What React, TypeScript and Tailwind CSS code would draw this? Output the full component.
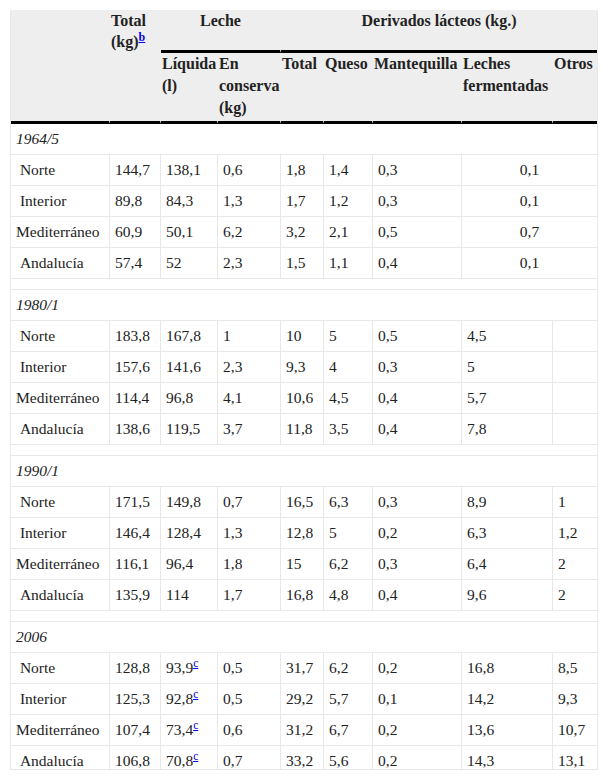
import React from 'react';

type Row = { name: string; vals: string[] };
type Section = { year: string; rows: Row[]; merged?: boolean; supLiquida?: boolean };

const sections: Section[] = [
  {
    year: '1964/5',
    merged: true,
    rows: [
      { name: '\u00a0Norte', vals: ['144,7', '138,1', '0,6', '1,8', '1,4', '0,3', '0,1'] },
      { name: '\u00a0Interior', vals: ['89,8', '84,3', '1,3', '1,7', '1,2', '0,3', '0,1'] },
      { name: 'Mediterráneo', vals: ['60,9', '50,1', '6,2', '3,2', '2,1', '0,5', '0,7'] },
      { name: '\u00a0Andalucía', vals: ['57,4', '52', '2,3', '1,5', '1,1', '0,4', '0,1'] },
    ],
  },
  {
    year: '1980/1',
    rows: [
      { name: '\u00a0Norte', vals: ['183,8', '167,8', '1', '10', '5', '0,5', '4,5', ''] },
      { name: '\u00a0Interior', vals: ['157,6', '141,6', '2,3', '9,3', '4', '0,3', '5', ''] },
      { name: 'Mediterráneo', vals: ['114,4', '96,8', '4,1', '10,6', '4,5', '0,4', '5,7', ''] },
      { name: '\u00a0Andalucía', vals: ['138,6', '119,5', '3,7', '11,8', '3,5', '0,4', '7,8', ''] },
    ],
  },
  {
    year: '1990/1',
    rows: [
      { name: '\u00a0Norte', vals: ['171,5', '149,8', '0,7', '16,5', '6,3', '0,3', '8,9', '1'] },
      { name: '\u00a0Interior', vals: ['146,4', '128,4', '1,3', '12,8', '5', '0,2', '6,3', '1,2'] },
      { name: 'Mediterráneo', vals: ['116,1', '96,4', '1,8', '15', '6,2', '0,3', '6,4', '2'] },
      { name: '\u00a0Andalucía', vals: ['135,9', '114', '1,7', '16,8', '4,8', '0,4', '9,6', '2'] },
    ],
  },
  {
    year: '2006',
    supLiquida: true,
    rows: [
      { name: '\u00a0Norte', vals: ['128,8', '93,9', '0,5', '31,7', '6,2', '0,2', '16,8', '8,5'] },
      { name: '\u00a0Interior', vals: ['125,3', '92,8', '0,5', '29,2', '5,7', '0,1', '14,2', '9,3'] },
      { name: 'Mediterráneo', vals: ['107,4', '73,4', '0,6', '31,2', '6,7', '0,2', '13,6', '10,7'] },
      { name: '\u00a0Andalucía', vals: ['106,8', '70,8', '0,7', '33,2', '5,6', '0,2', '14,3', '13,1'] },
    ],
  },
];

// header cells: bold, top aligned, thick black rule underneath
const th =
  'align-top font-bold text-[16px] px-px border-r border-r-[#eeeeee] border-b-[3px] border-b-black';
const td = 'px-[5px] py-[5px] leading-[20px] border-b border-[#e8e8e8]';

export default function App() {
  return (
    <div className="p-[10px] bg-white font-['Liberation_Serif','Times_New_Roman',serif] text-[#222]">
      <div className="w-[588px] h-[760px] overflow-hidden border-x border-b border-[#e8e8e8]">
        <table className="w-[586px] table-fixed border-separate border-spacing-0 text-[15.5px]">
          <colgroup>
            <col className="w-[99px]" />
            <col className="w-[51px]" />
            <col className="w-[57px]" />
            <col className="w-[63px]" />
            <col className="w-[43px]" />
            <col className="w-[49px]" />
            <col className="w-[89px]" />
            <col className="w-[91px]" />
            <col className="w-[44px]" />
          </colgroup>
          <thead className="bg-[#eeeeee]">
            <tr>
              <th rowSpan={2} className={th}></th>
              <th rowSpan={2} className={th + ' text-left leading-[21px]'}>
                Total (kg)
                <sup className="text-[#0000ee] underline">b</sup>
              </th>
              <th colSpan={2} className={th + ' text-center leading-[21px] h-[43px]'}>
                Leche
              </th>
              <th colSpan={5} className={th + ' text-center leading-[21px] border-r-0'}>
                Derivados lácteos (kg.)
              </th>
            </tr>
            <tr>
              <th className={th + ' text-left leading-[22px] h-[71px]'}>Líquida (l)</th>
              <th className={th + ' text-left leading-[22px]'}>En conserva (kg)</th>
              <th className={th + ' text-left leading-[22px]'}>Total</th>
              <th className={th + ' text-left leading-[22px]'}>Queso</th>
              <th className={th + ' text-left leading-[22px]'}>Mantequilla</th>
              <th className={th + ' text-left leading-[22px]'}>Leches fermentadas</th>
              <th className={th + ' text-left leading-[22px] border-r-0'}>Otros</th>
            </tr>
          </thead>
          <tbody>
            {sections.map((s, si) => (
              <React.Fragment key={s.year}>
                {si > 0 && (
                  <tr>
                    <td colSpan={9} className={td + ' leading-[0px]'}></td>
                  </tr>
                )}
                <tr>
                  <td colSpan={9} className={td + ' italic'}>
                    {s.year}
                  </td>
                </tr>
                {s.rows.map((r) => (
                  <tr key={s.year + r.name}>
                    <td className={td + ' border-r whitespace-nowrap'}>{r.name}</td>
                    {r.vals.map((v, i) => {
                      const last = i === r.vals.length - 1;
                      if (s.merged && last) {
                        return (
                          <td key={i} colSpan={2} className={td + ' text-center'}>
                            {v}
                          </td>
                        );
                      }
                      return (
                        <td key={i} className={td + (last ? '' : ' border-r')}>
                          {v}
                          {s.supLiquida && i === 1 && (
                            <sup className="text-[#0000ee] underline">c</sup>
                          )}
                        </td>
                      );
                    })}
                  </tr>
                ))}
              </React.Fragment>
            ))}
          </tbody>
        </table>
      </div>
    </div>
  );
}
